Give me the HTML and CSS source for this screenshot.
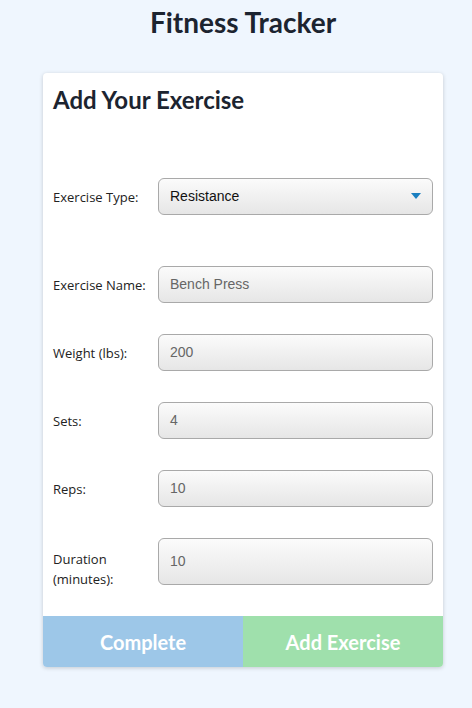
FILE: index.html
```html
<!DOCTYPE html>
<html lang="en">
<head>
<meta charset="utf-8">
<title>Fitness Tracker</title>
<link rel="stylesheet" href="styles.css">
</head>
<body>
<div class="page">
<h1 class="app-title">Fitness Tracker</h1>
<div class="card">
  <h2 class="card-title">Add Your Exercise</h2>
  <form class="form">
    <div class="row row-type">
      <label class="label">Exercise Type:</label>
      <div class="select">
        <span>Resistance</span>
        <svg class="caret" width="10" height="6" viewBox="0 0 10 6"><path d="M0 0 H10 L5 6 Z" fill="#1a7fc0"/></svg>
      </div>
    </div>
    <div class="row">
      <label class="label">Exercise Name:</label>
      <div class="input">Bench Press</div>
    </div>
    <div class="row">
      <label class="label">Weight (lbs):</label>
      <div class="input">200</div>
    </div>
    <div class="row">
      <label class="label">Sets:</label>
      <div class="input">4</div>
    </div>
    <div class="row">
      <label class="label">Reps:</label>
      <div class="input">10</div>
    </div>
    <div class="row">
      <label class="label label-wrap">Duration (minutes):</label>
      <div class="input input-tall">10</div>
    </div>
  </form>
  <div class="actions">
    <button class="btn btn-complete" type="button">Complete</button>
    <button class="btn btn-add" type="button">Add Exercise</button>
  </div>
</div>
</div>
</body>
</html>
```
FILE: styles.css
```css
* { box-sizing: border-box; }
html, body { margin: 0; padding: 0; }
body {
  background: #eff6fe;
  font-family: "Open Sans", "Liberation Sans", sans-serif;
  color: #222;
  width: 472px;
  height: 708px;
}
.page {
  width: 400px;
  margin-left: 43px;
}
.app-title {
  font-family: Lato, sans-serif;
  font-weight: 700;
  font-size: 28px;
  line-height: 34px;
  color: #1c2430;
  text-align: center;
  margin: 5px 0 0;
}
.card {
  margin-top: 34px;
  background: #fff;
  border-radius: 4px;
  box-shadow: 0 1px 4px rgba(0,0,0,0.18);
  overflow: hidden;
}
.card-title {
  font-family: Lato, sans-serif;
  font-weight: 700;
  font-size: 24px;
  line-height: 30px;
  color: #1c2430;
  margin: 0;
  padding: 12px 10px 0;
}
.form {
  padding: 63px 10px 31px;
  display: flex;
  flex-direction: column;
  gap: 31px;
}
.row-type { margin-bottom: 20px; }
.row {
  display: grid;
  grid-template-columns: 105px 1fr;
  align-items: center;
}
.label {
  font-size: 13px;
  line-height: 20px;
  color: #222;
  padding-right: 8px;
}
.label-wrap { align-self: start; margin: 11px 0 -4px; }
.select, .input {
  height: 37px;
  border: 1px solid #a9a9a9;
  border-radius: 6px;
  background: linear-gradient(#fbfbfb, #e6e6e6);
  font-family: "Liberation Sans", Arial, sans-serif;
  font-size: 14px;
  display: flex;
  align-items: center;
  padding: 0 11px 2px;
}
.select { color: #111; justify-content: space-between; }
.input { color: #666; }
.input-tall { height: 47px; }
.actions {
  display: flex;
}
.btn {
  flex: 1;
  height: 51px;
  border: none;
  margin: 0;
  font-family: Lato, sans-serif;
  font-weight: 700;
  font-size: 20px;
  color: #fff;
  cursor: pointer;
}
.btn-complete { background: #9dc7e8; }
.btn-add { background: #9fe0ac; }
```
